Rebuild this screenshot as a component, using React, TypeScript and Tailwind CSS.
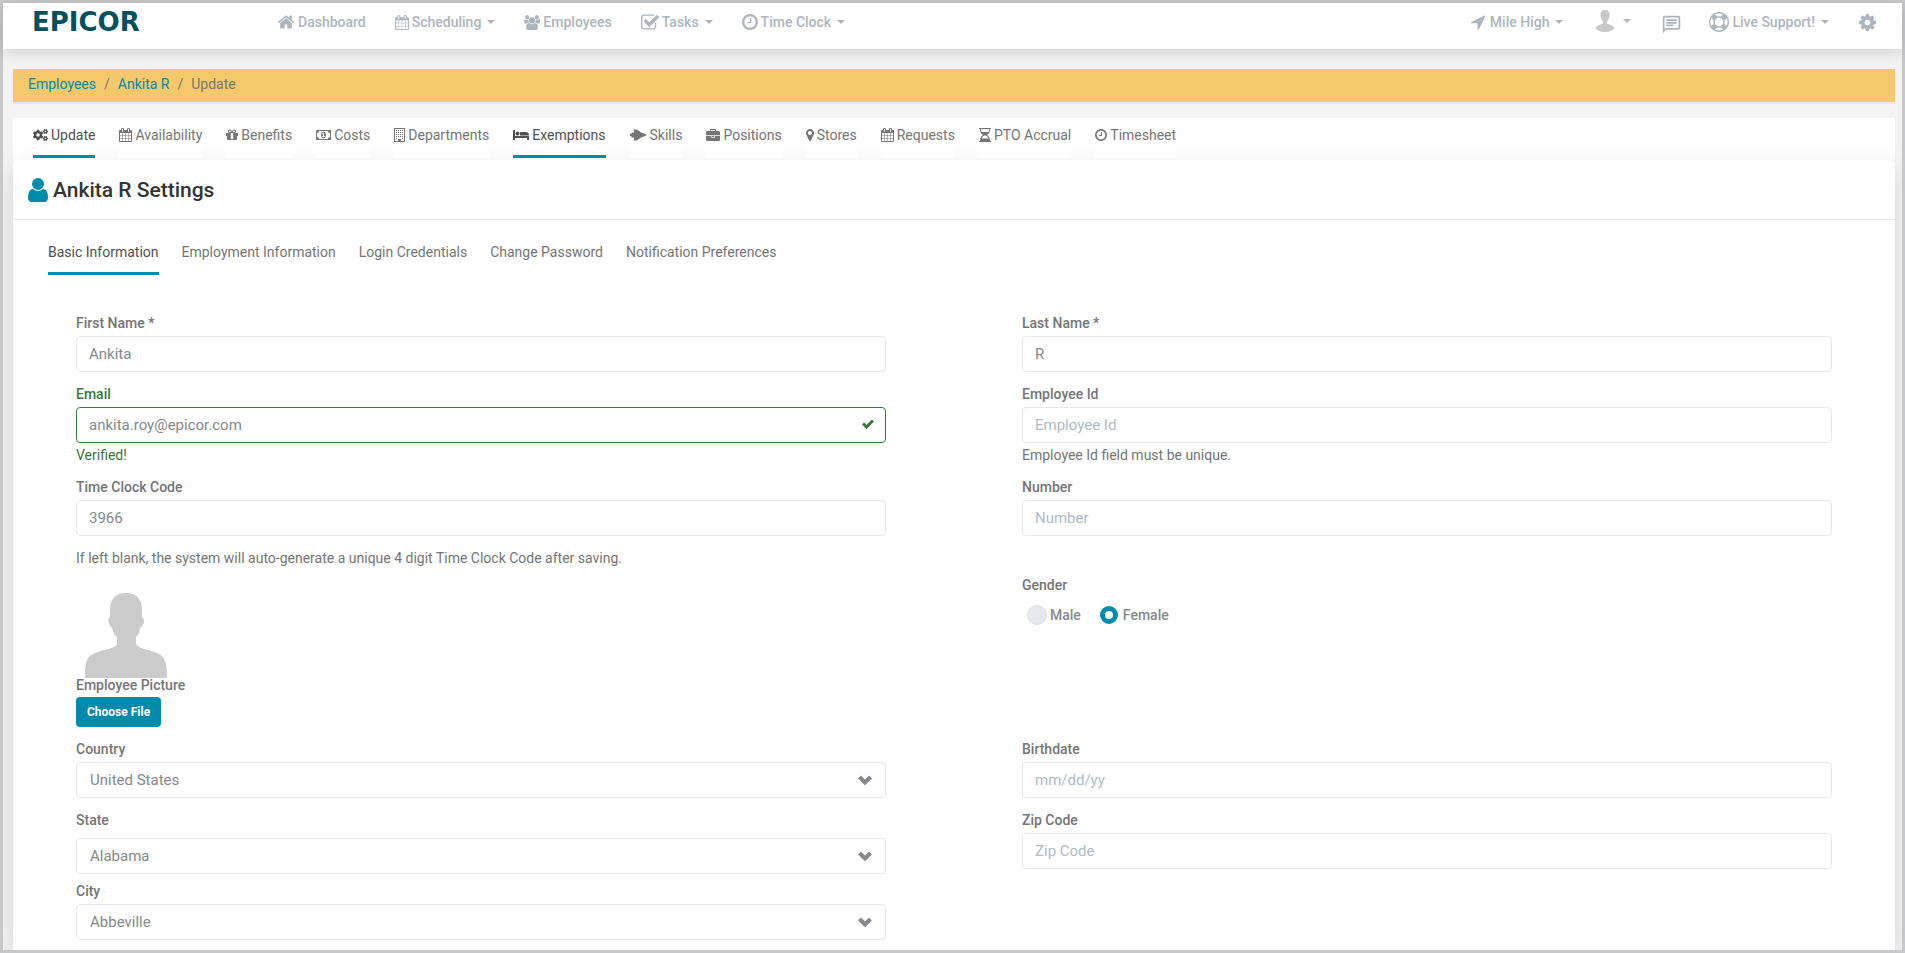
import type { ReactNode } from "react";
import { FaCogs } from "react-icons/fa";
import { MdOutlineChat } from "react-icons/md";

const paths = {
  home: "M1472 992v480q0 26-19 45t-45 19h-384v-384h-256v384h-384q-26 0-45-19t-19-45v-480q0-1 .5-3t.5-3l575-474 575 474q1 2 1 6zm223-69l-62 74q-8 9-21 11h-3q-13 0-21-7l-692-577-692 577q-12 8-24 7-13-2-21-11l-62-74q-8-10-7-23.5t11-21.5l719-599q32-26 76-26t76 26l244 204v-195q0-14 9-23t23-9h192q14 0 23 9t9 23v408l219 182q10 8 11 21.5t-7 23.5z",
  calendar:
    "M192 1664h288v-288h-288v288zm352 0h320v-288h-320v288zm-352-352h288v-320h-288v320zm352 0h320v-320h-320v320zm-352-384h288v-288h-288v288zm736 736h320v-288h-320v288zm-384-736h320v-288h-320v288zm768 736h288v-288h-288v288zm-384-352h320v-320h-320v320zm-352-864v-288q0-13-9.5-22.5t-22.5-9.5h-64q-13 0-22.5 9.5t-9.5 22.5v288q0 13 9.5 22.5t22.5 9.5h64q13 0 22.5-9.5t9.5-22.5zm736 864h288v-320h-288v320zm-384-384h320v-288h-320v288zm384 0h288v-288h-288v288zm32-480v-288q0-13-9.5-22.5t-22.5-9.5h-64q-13 0-22.5 9.5t-9.5 22.5v288q0 13 9.5 22.5t22.5 9.5h64q13 0 22.5-9.5t9.5-22.5zm384-64v1280q0 52-38 90t-90 38h-1408q-52 0-90-38t-38-90v-1280q0-52 38-90t90-38h128v-96q0-66 47-113t113-47h64q66 0 113 47t47 113v96h384v-96q0-66 47-113t113-47h64q66 0 113 47t47 113v96h128q52 0 90 38t38 90z",
  clock:
    "M1024 544v448q0 14-9 23t-23 9h-320q-14 0-23-9t-9-23v-64q0-14 9-23t23-9h224v-352q0-14 9-23t23-9h64q14 0 23 9t9 23zm416 352q0-148-73-273t-198-198-273-73-273 73-198 198-73 273 73 273 198 198 273 73 273-73 198-198 73-273zm224 0q0 209-103 385.5t-279.5 279.5-385.5 103-385.5-103-279.5-279.5-103-385.5 103-385.5 279.5-279.5 385.5-103 385.5 103 279.5 279.5 103 385.5z",
  checkSquare:
    "M1472 930v318q0 119-84.5 203.5t-203.5 84.5h-832q-119 0-203.5-84.5t-84.5-203.5v-832q0-119 84.5-203.5t203.5-84.5h832q63 0 117 25 15 7 18 23 3 17-9 29l-49 49q-10 10-23 10-3 0-9-2-23-6-45-6h-832q-66 0-113 47t-47 113v832q0 66 47 113t113 47h832q66 0 113-47t47-113v-254q0-13 9-22l64-64q10-10 23-10 6 0 12 3 20 8 20 29zm231-489l-814 814q-24 24-57 24t-57-24l-430-430q-24-24-24-57t24-57l110-110q24-24 57-24t57 24l263 263 647-647q24-24 57-24t57 24l110 110q24 24 24 57t-24 57z",
  users:
    "M657 896q-162 5-265 128h-134q-82 0-138-40.5t-56-118.5q0-353 124-353 6 0 43.5 21t97.5 42.5 119 21.5q67 0 133-23-5 37-5 66 0 159 93 290zm1071 637q0 120-73 189.5t-194 69.5h-874q-121 0-194-69.5t-73-189.5q0-53 3.5-103.5t14-109 26.5-108.5 43-97.5 62-81 85.5-53.5 111.5-20q10 0 43 21.5t73 48 107 48 135 21.5 135-21.5 107-48 73-48 43-21.5q61 0 111.5 20t85.5 53.5 62 81 43 97.5 26.5 108.5 14 109 3.5 103.5zm-1024-1277q0 106-75 181t-181 75-181-75-75-181 75-181 181-75 181 75 75 181zm704 384q0 159-112.5 271.5t-271.5 112.5-271.5-112.5-112.5-271.5 112.5-271.5 271.5-112.5 271.5 112.5 112.5 271.5zm576 225q0 78-56 118.5t-138 40.5h-134q-103-123-265-128 93-131 93-290 0-29-5-66 66 23 133 23 59 0 119-21.5t97.5-42.5 43.5-21q124 0 124 353zm-128-609q0 106-75 181t-181 75-181-75-75-181 75-181 181-75 181 75 75 181z",
  arrow:
    "M1593 349l-640 1280q-17 35-57 35-5 0-15-2-22-5-35.5-22.5t-13.5-39.5v-576h-576q-22 0-39.5-13.5t-22.5-35.5 4-42 29-30l1280-640q13-7 29-7 27 0 45 19 15 14 18.5 34.5t-6.5 39.5z",
  lifeRing:
    "M896 0q182 0 348 71t286 191 191 286 71 348-71 348-191 286-286 191-348 71-348-71-286-191-191-286-71-348 71-348 191-286 286-191 348-71zm0 128q-190 0-361 90l194 194q82-28 167-28t167 28l194-194q-171-90-361-90zm-678 1129l194-194q-28-82-28-167t28-167l-194-194q-90 171-90 361t90 361zm678 407q190 0 361-90l-194-194q-82 28-167 28t-167-28l-194 194q171 90 361 90zm0-384q159 0 271.5-112.5t112.5-271.5-112.5-271.5-271.5-112.5-271.5 112.5-112.5 271.5 112.5 271.5 271.5 112.5zm484-217l194 194q90-171 90-361t-90-361l-194 194q28 82 28 167t-28 167z",
  cog: "M1152 896q0-106-75-181t-181-75-181 75-75 181 75 181 181 75 181-75 75-181zm512-109v222q0 12-8 23t-20 13l-185 28q-19 54-39 91 35 50 107 138 10 12 10 25t-9 23q-27 37-99 108t-94 71q-12 0-26-9l-138-108q-44 23-91 38-16 136-29 186-7 28-36 28h-222q-14 0-24.5-8.5t-11.5-21.5l-28-184q-49-16-90-37l-141 107q-10 9-25 9-14 0-25-11-126-114-165-168-7-10-7-23 0-12 8-23 15-21 51-66.5t54-70.5q-27-50-41-99l-183-27q-13-2-21-12.5t-8-23.5v-222q0-12 8-23t19-13l186-28q14-46 39-92-40-57-107-138-10-12-10-24 0-10 9-23 26-36 98.5-107.5t94.5-71.5q13 0 26 10l138 107q44-23 91-38 16-136 29-186 7-28 36-28h222q14 0 24.5 8.5t11.5 21.5l28 184q49 16 90 37l142-107q9-9 24-9 13 0 25 10 129 119 165 170 7 8 7 22 0 12-8 23-15 21-51 66.5t-54 70.5q26 50 41 98l183 28q13 2 21 12.5t8 23.5z",
  user: "M1536 1399q0 109-62.5 187t-150.5 78h-854q-88 0-150.5-78t-62.5-187q0-85 8.5-160.5t31.5-152 58.5-131 94-89 134.5-34.5q131 128 313 128t313-128q76 0 134.5 34.5t94 89 58.5 131 31.5 152 8.5 160.5zm-256-887q0 159-112.5 271.5t-271.5 112.5-271.5-112.5-112.5-271.5 112.5-271.5 271.5-112.5 271.5 112.5 112.5 271.5z",
  marker:
    "M1152 640q0-106-75-181t-181-75-181 75-75 181 75 181 181 75 181-75 75-181zm256 0q0 109-33 179l-364 774q-16 33-47.5 52t-67.5 19-67.5-19-46.5-52l-365-774q-33-70-33-179 0-212 150-362t362-150 362 150 150 362z",
  briefcase:
    "M640 256h512v-128h-512v128zm1152 640v480q0 66-47 113t-113 47h-1472q-66 0-113-47t-47-113v-480h672v160q0 26 19 45t45 19h320q26 0 45-19t19-45v-160h672zm-768 0v128h-256v-128h256zm768-480v384h-1792v-384q0-66 47-113t113-47h352v-160q0-40 28-68t68-28h576q40 0 68 28t28 68v160h352q66 0 113 47t47 113z",
  gift: "M1056 1356v-716h-320v716q0 25 18 38.5t46 13.5h192q28 0 46-13.5t18-38.5zm-456-844h195l-126-161q-26-31-69-31-40 0-68 28t-28 68 28 68 68 28zm688-96q0-40-28-68t-68-28q-43 0-69 31l-125 161h194q40 0 68-28t28-68zm376 256v320q0 14-9 23t-23 9h-96v416q0 40-28 68t-68 28h-1088q-40 0-68-28t-28-68v-416h-96q-14 0-23-9t-9-23v-320q0-14 9-23t23-9h440q-93 0-158.5-65.5t-65.5-158.5 65.5-158.5 158.5-65.5q107 0 168 77l128 165 128-165q61-77 168-77 93 0 158.5 65.5t65.5 158.5-65.5 158.5-158.5 65.5h440q14 0 23 9t9 23z",
  money:
    "M768 1152h384v-96h-128v-448h-114l-148 137 77 80q42-37 55-57h2v288h-128v96zm512-256q0 70-21 142t-59.5 134-101.5 101-138 39-138-39-101.5-101-59.5-134-21-142 21-142 59.5-134 101.5-101 138-39 138 39 101.5 101 59.5 134 21 142zm512 256v-512q-106 0-181-75t-75-181h-1152q0 106-75 181t-181 75v512q106 0 181 75t75 181h1152q0-106 75-181t181-75zm128-832v1152q0 26-19 45t-45 19h-1792q-26 0-45-19t-19-45v-1152q0-26 19-45t45-19h1792q26 0 45 19t19 45z",
  bed: "M256 1024h1728q26 0 45 19t19 45v448h-256v-256h-1536v256h-256v-1216q0-26 19-45t45-19h128q26 0 45 19t19 45v704zm576-320q0-106-75-181t-181-75-181 75-75 181 75 181 181 75 181-75 75-181zm1216 256v-64q0-159-112.5-271.5t-271.5-112.5h-704q-26 0-45 19t-19 45v384h1152z",
  jet: "M0 5H1L2 3.500H4V1.500H3.500V.5H7L11 3.500L14 4.500L17 6L14 7.500L11 8.500L7 11.500H3.500V10.500H4V8.500H2L1 7H0Z",
  building:
    "M192 0h1408v1792h-1408zM320 128v1536h384v-256h384v256h384v-1536zM448 256h128v128h-128zM704 256h128v128h-128zM960 256h128v128h-128zM1216 256h128v128h-128zM448 512h128v128h-128zM704 512h128v128h-128zM960 512h128v128h-128zM1216 512h128v128h-128zM448 768h128v128h-128zM704 768h128v128h-128zM960 768h128v128h-128zM1216 768h128v128h-128zM448 1024h128v128h-128zM704 1024h128v128h-128zM960 1024h128v128h-128zM1216 1024h128v128h-128zM448 1280h128v128h-128zM1216 1280h128v128h-128z",
  hourglass:
    "M128 0h1536v128h-1536zM128 1664h1536v128h-1536zM256 128h128q0 240 70 384h884q70-144 70-384h128q0 564-390 768 390 204 390 768h-1280q0-564 390-768-390-204-390-768zM800 960q-230 90-350 380h892q-120-290-350-380z",
};

type IconProps = { d: string; box?: string; className: string };

const Icon = ({ d, box = "0 0 1792 1792", className }: IconProps) => (
  <svg viewBox={box} fill="currentColor" fillRule="evenodd" aria-hidden="true" className={`shrink-0 ${className}`}>
    <path d={d} />
  </svg>
);

const Caret = () => (
  <svg viewBox="0 0 8 4" fill="currentColor" aria-hidden="true" className="ml-1.5 w-2 h-1">
    <path d="M0 0h8L4 4z" />
  </svg>
);

const Silhouette = ({ className }: { className: string }) => (
  <svg viewBox="0 0 100 100" fill="#cbcbcb" aria-hidden="true" className={className}>
    <path d="M50 15C39 15 34 22 34 31V39Q31 41 33 45Q34 49 36 50Q38 57 41 59V66C38 71 29 71 19 75C10 79 9 85 9 100H91C91 85 90 79 81 75C71 71 63 71 60 66V59Q63 57 64 50Q66 49 68 45Q69 41 66 39V31C66 22 61 15 50 15Z" />
  </svg>
);

const navItems = [
  { label: "Dashboard", icon: <Icon d={paths.home} className="w-[18px] h-[18px] mr-[3px]" />, menu: false },
  { label: "Scheduling", icon: <Icon d={paths.calendar} box="64 0 1664 1792" className="w-[14px] h-[15px] mr-[3px]" />, menu: true },
  { label: "Employees", icon: <Icon d={paths.users} box="64 0 1920 1792" className="w-[16px] h-[15px] mr-[3px]" />, menu: false },
  { label: "Tasks", icon: <Icon d={paths.checkSquare} box="64 0 1664 1664" className="w-[18px] h-[18px] mr-[3px]" />, menu: true },
  { label: "Time Clock", icon: <Icon d={paths.clock} box="128 128 1536 1536" className="w-[16px] h-[16px] mr-[3px]" />, menu: true },
];

const tabs = [
  { label: "Update", icon: <FaCogs className="w-[15px] h-[14px]" />, active: true },
  { label: "Availability", icon: <Icon d={paths.calendar} box="64 0 1664 1792" className="w-[13px] h-[14px]" /> },
  { label: "Benefits", icon: <Icon d={paths.gift} box="128 128 1536 1536" className="w-[12px] h-[12px]" /> },
  { label: "Costs", icon: <Icon d={paths.money} box="0 256 1920 1280" className="w-[15px] h-[10px]" /> },
  { label: "Departments", icon: <Icon d={paths.building} box="192 0 1408 1792" className="w-[11px] h-[14px]" /> },
  { label: "Exemptions", icon: <Icon d={paths.bed} box="0 256 2048 1280" className="w-[16px] h-[10px]" />, active: true },
  { label: "Skills", icon: <Icon d={paths.jet} box="0 0 17 12" className="w-[17px] h-[12px]" /> },
  { label: "Positions", icon: <Icon d={paths.briefcase} box="0 0 1792 1536" className="w-[14px] h-[12px]" /> },
  { label: "Stores", icon: <Icon d={paths.marker} box="384 128 1024 1536" className="w-[8px] h-[12px]" /> },
  { label: "Requests", icon: <Icon d={paths.calendar} box="64 0 1664 1792" className="w-[13px] h-[14px]" /> },
  { label: "PTO Accrual", icon: <Icon d={paths.hourglass} box="128 0 1536 1792" className="w-[12px] h-[14px]" /> },
  { label: "Timesheet", icon: <Icon d={paths.clock} box="128 128 1536 1536" className="w-[12px] h-[12px]" /> },
];

const sections = [
  "Basic Information",
  "Employment Information",
  "Login Credentials",
  "Change Password",
  "Notification Preferences",
];

const controlClass =
  "block w-full h-9 text-[15px] rounded border bg-white text-[#85888c] placeholder:text-[#afbbc5] placeholder:opacity-100";

type FieldProps = {
  id: string;
  label: string;
  value?: string;
  placeholder?: string;
  type?: string;
  valid?: boolean;
  children?: ReactNode;
};

const Field = ({ id, label, value, placeholder, type = "text", valid, children }: FieldProps) => (
  <div className={valid ? "text-[#3c763d]" : ""}>
    <label htmlFor={id} className="block mb-[3px] font-medium">
      {label}
    </label>
    <div className="relative">
      <input
        id={id}
        type={type}
        defaultValue={value}
        placeholder={placeholder}
        className={`${controlClass} px-3 ${valid ? "border-[#3c763d]" : "border-[#e6e9ea]"}`}
      />
      {valid && (
        <svg viewBox="0 0 12 10" aria-hidden="true" className="absolute right-3 top-3 w-3 h-[10px]">
          <path d="M1 4.500l3.500 3.500 6.500-6.500" fill="none" stroke="currentColor" strokeWidth="3" />
        </svg>
      )}
    </div>
    {children}
  </div>
);

type SelectFieldProps = { id: string; label: string; value: string; labelClass?: string };

const SelectField = ({ id, label, value, labelClass = "mb-[3px]" }: SelectFieldProps) => (
  <div>
    <label htmlFor={id} className={`block font-medium ${labelClass}`}>
      {label}
    </label>
    <div className="relative">
      <select id={id} className={`${controlClass} appearance-none px-[13px] pt-px border-[#e6e9ea]`}>
        <option>{value}</option>
      </select>
      <svg viewBox="0 0 14 10" aria-hidden="true" className="absolute right-[14px] top-[13px] w-[14px] h-[10px] text-[#85888c] pointer-events-none">
        <path d="M1.500 2L7 7.500 12.500 2" fill="none" stroke="currentColor" strokeWidth="4" />
      </svg>
    </div>
  </div>
);

const radioClass =
  "appearance-none size-5 mr-[3px] rounded-full border border-[#dcdfe0] bg-[#e6eaec] checked:size-[18px] checked:mr-[5px] checked:border-[5px] checked:border-[#008aac] checked:bg-white";

const Header = () => (
  <header className="relative flex items-center justify-between h-[46px] pb-2 pl-[29px] pr-[26px] bg-white text-[#adb5bd] font-medium shadow-[0_4px_14px_rgba(0,0,0,0.14)]">
    <div className="flex items-center">
      <a href="#" className="w-[245px] font-['DejaVu_Sans',sans-serif] font-bold text-[26px] leading-5 text-[#00505f]">
        EPICOR
      </a>
      <nav className="flex items-center gap-[29px]">
        {navItems.map((item) => (
          <a key={item.label} href="#" className="flex items-center">
            {item.icon}
            {item.label}
            {item.menu && <Caret />}
          </a>
        ))}
      </nav>
    </div>
    <div className="flex items-center">
      <button type="button" className="flex items-center mr-8">
        <Icon d={paths.arrow} box="192 128 1472 1536" className="w-[15px] h-[16px] mr-1" />
        Mile High
        <Caret />
      </button>
      <button type="button" aria-label="Account" className="flex items-center mr-[30px] pb-0.5">
        <svg viewBox="0 0 20 22" fill="#c9c9c9" aria-hidden="true" className="w-5 h-[22px]">
          <path d="M10 0C6.500 0 5.500 2 5.500 5C5.500 8 6.500 10 8 11.500V13.500C6 15 1.500 14.500 .5 18.500C3 21 6 22 10 22S17 21 19.500 18.500C18.500 14.500 14 15 12 13.500V11.500C13.500 10 14.500 8 14.500 5C14.500 2 13.500 0 10 0Z" />
        </svg>
        <span className="ml-0.5">
          <Caret />
        </span>
      </button>
      <button type="button" aria-label="Messages" className="mr-[27px] pt-1">
        <MdOutlineChat className="w-[21px] h-[21px]" />
      </button>
      <button type="button" className="flex items-center mr-[30px]">
        <Icon d={paths.lifeRing} className="w-5 h-5 mr-[3px]" />
        Live Support!
        <Caret />
      </button>
      <button type="button" aria-label="Settings">
        <Icon d={paths.cog} box="128 128 1536 1536" className="w-[17px] h-[17px]" />
      </button>
    </div>
  </header>
);

const App = () => {
  return (
    <div className="min-h-screen flex flex-col border-3 border-[#c6c7c8] bg-[#f3f3f3] font-['Roboto',sans-serif] text-sm text-[#757575]">
      <Header />
      <main className="flex-1 flex flex-col pl-[10px] pr-[7px] pt-5 overflow-hidden">
        <nav aria-label="Breadcrumb" className="flex gap-2 h-[33px] px-[15px] pt-[5px] bg-[#f5c96b] shadow-[0_2px_0_#e8e8e8]">
          <a href="#" className="text-[#008aac]">
            Employees
          </a>
          <span>/</span>
          <a href="#" className="text-[#008aac]">
            Ankita R
          </a>
          <span>/</span>
          <span>Update</span>
        </nav>

        <nav className="flex gap-6 mt-4 px-5 pb-0.5 bg-white">
          {tabs.map((tab) => (
            <a
              key={tab.label}
              href="#"
              className={`relative flex items-center gap-[3px] h-10 pt-[7px] pb-[10px] border-b-3 bg-white ${
                tab.active ? "border-[#008aac] text-[#505050]" : "border-white"
              }`}
            >
              {tab.icon}
              {tab.label}
            </a>
          ))}
        </nav>

        <section className="flex-1 rounded-t bg-white shadow-[0_8px_24px_rgba(0,0,0,0.12)]">
          <h1 className="flex items-center h-[60px] px-[15px] border-b border-[#e6e9ea] text-[21px] font-medium text-[#333]">
            <Icon d={paths.user} box="256 128 1280 1536" className="w-5 h-6 mr-[5px] text-[#008aac]" />
            Ankita R Settings
          </h1>

          <nav className="flex gap-[23px] px-[35px] pt-[22px]">
            {sections.map((name, i) => (
              <a
                key={name}
                href="#"
                className={`pb-[10px] border-b-3 ${i === 0 ? "border-[#008aac] text-[#505050]" : "border-transparent"}`}
              >
                {name}
              </a>
            ))}
          </nav>

          <form className="grid grid-cols-2 items-start gap-x-[136px] gap-y-3 px-[63px] pt-[38px] pb-2">
            <Field id="first-name" label="First Name *" value="Ankita" />
            <Field id="last-name" label="Last Name *" value="R" />

            <Field id="email" label="Email" type="email" value="ankita.roy@epicor.com" valid>
              <p className="mt-0.5">Verified!</p>
            </Field>
            <Field id="employee-id" label="Employee Id" placeholder="Employee Id">
              <p className="mt-0.5">Employee Id field must be unique.</p>
            </Field>

            <Field id="clock-code" label="Time Clock Code" value="3966">
              <p className="mt-[14px] leading-4">
                If left blank, the system will auto-generate a unique 4 digit Time Clock Code after saving.
              </p>
            </Field>
            <Field id="number" label="Number" placeholder="Number" />

            <div>
              <Silhouette className="w-[100px] h-[100px]" />
              <p className="mb-[5px] leading-[14px] font-medium">Employee Picture</p>
              <button type="button" className="block h-[30px] px-[11px] rounded bg-[#008aac] text-white text-xs font-bold">
                Choose File
              </button>
            </div>
            <fieldset>
              <legend className="leading-[14px] font-medium">Gender</legend>
              <div className="flex items-center gap-[19px] mt-[13px] pl-[5px] font-medium text-[#85888c]">
                <label className="flex items-center h-5">
                  <input type="radio" name="gender" className={radioClass} />
                  Male
                </label>
                <label className="flex items-center h-5">
                  <input type="radio" name="gender" defaultChecked className={radioClass} />
                  Female
                </label>
              </div>
            </fieldset>

            <SelectField id="country" label="Country" value="United States" />
            <Field id="birthdate" label="Birthdate" placeholder="mm/dd/yy" />

            <div className="flex flex-col gap-[7px]">
              <SelectField id="state" label="State" value="Alabama" labelClass="mb-2" />
              <SelectField id="city" label="City" value="Abbeville" />
            </div>
            <Field id="zip" label="Zip Code" placeholder="Zip Code" />
          </form>
        </section>
      </main>
    </div>
  );
};

export default App;
